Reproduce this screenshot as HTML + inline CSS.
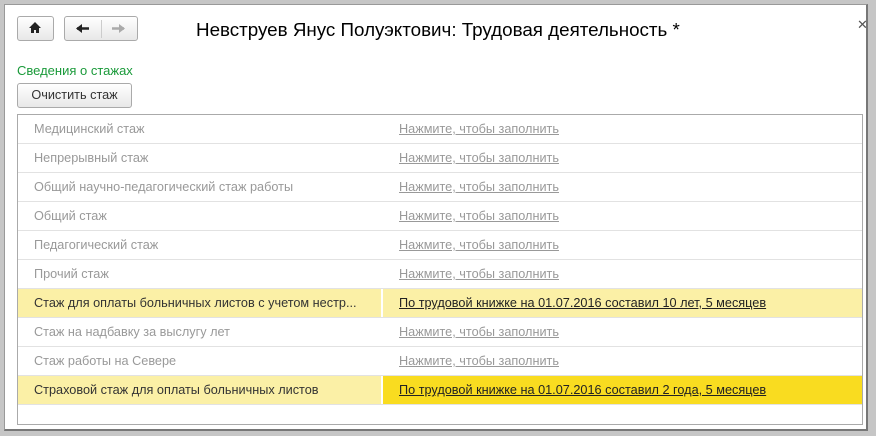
<!DOCTYPE html>
<html><head><meta charset="utf-8"><style>
body{margin:0;width:876px;height:436px;background:#c6c6c6;font-family:"Liberation Sans",Arial,sans-serif;position:relative;overflow:hidden}
.win{position:absolute;left:4px;top:4px;width:864px;height:427px;background:#fff;border-left:1px solid #999;border-top:1px solid #999;border-right:2px solid #777;border-bottom:2px solid #777;box-sizing:border-box}
.btn{position:absolute;border:1px solid #aaa;border-radius:3px;background:linear-gradient(#fff,#e8e8e8);box-sizing:border-box}
.title{position:absolute;left:196px;top:19px;font-size:18.8px;color:#000}
.x{position:absolute;left:857px;top:17px;font-size:13px;color:#555}
.sec{position:absolute;left:17px;top:63px;font-size:13px;color:#1a9a3a}
.tbl{position:absolute;left:17px;top:114px;width:846px;height:311px;border:1px solid #aaa;box-sizing:border-box}
.row{position:absolute;left:0;width:844px;height:29px;border-bottom:1px solid #e2e2e2;box-sizing:border-box;font-size:12.7px}
.c1,.c2{position:absolute;top:0;height:28px;line-height:28px;white-space:nowrap}
.c1{left:0;width:364px;padding-left:16px;color:#999;box-sizing:border-box}
.c2{left:365px;width:479px;padding-left:16px;box-sizing:border-box;color:#999;text-decoration:underline}
.y .c1{background:#fbf0a6;color:#333}.y .c2{background:#fbf0a6;color:#222}
.yy .c2{background:#f9dc20}
.y .c1{border-right:1px solid #fff}
</style></head><body>
<div class="win"></div>
<div class="btn" style="left:17px;top:16px;width:37px;height:25px"><svg width="37" height="25" style="position:absolute;left:-1px;top:-1px"><path d="M18 6 L12 12 H14 V17 H17 V14 H19 V17 H22 V12 H24 Z" fill="#222"/></svg></div>
<div class="btn" style="left:64px;top:16px;width:74px;height:25px"><div style="position:absolute;left:36px;top:3px;width:1px;height:18px;background:#ccc"></div><svg width="74" height="25" style="position:absolute;left:-1px;top:-1px"><path d="M13 12.5H25" stroke="#222" stroke-width="2.5"/><path d="M12 12.5L18 8V17Z" fill="#222"/><path d="M60 12.5H48" stroke="#aaa" stroke-width="2.5"/><path d="M61 12.5L55 8V17Z" fill="#aaa"/></svg></div>
<div class="title">Невструев Янус Полуэктович: Трудовая деятельность *</div>
<div class="x">✕</div>
<div class="sec">Сведения о стажах</div>
<div class="btn" style="left:17px;top:83px;width:115px;height:25px;font-size:12.7px;line-height:23px;text-align:center;color:#333">Очистить стаж</div>
<div class="tbl">
<div class="row" style="top:0"><div class="c1">Медицинский стаж</div><div class="c2">Нажмите, чтобы заполнить</div></div>
<div class="row" style="top:29px"><div class="c1">Непрерывный стаж</div><div class="c2">Нажмите, чтобы заполнить</div></div>
<div class="row" style="top:58px"><div class="c1">Общий научно-педагогический стаж работы</div><div class="c2">Нажмите, чтобы заполнить</div></div>
<div class="row" style="top:87px"><div class="c1">Общий стаж</div><div class="c2">Нажмите, чтобы заполнить</div></div>
<div class="row" style="top:116px"><div class="c1">Педагогический стаж</div><div class="c2">Нажмите, чтобы заполнить</div></div>
<div class="row" style="top:145px"><div class="c1">Прочий стаж</div><div class="c2">Нажмите, чтобы заполнить</div></div>
<div class="row y" style="top:174px"><div class="c1">Стаж для оплаты больничных листов с учетом нестр...</div><div class="c2">По трудовой книжке на 01.07.2016 составил 10 лет, 5 месяцев</div></div>
<div class="row" style="top:203px"><div class="c1">Стаж на надбавку за выслугу лет</div><div class="c2">Нажмите, чтобы заполнить</div></div>
<div class="row" style="top:232px"><div class="c1">Стаж работы на Севере</div><div class="c2">Нажмите, чтобы заполнить</div></div>
<div class="row y yy" style="top:261px"><div class="c1">Страховой стаж для оплаты больничных листов</div><div class="c2">По трудовой книжке на 01.07.2016 составил 2 года, 5 месяцев</div></div>
</div>
</body></html>
